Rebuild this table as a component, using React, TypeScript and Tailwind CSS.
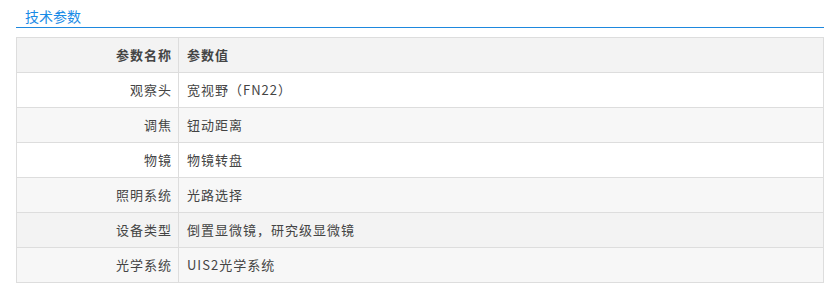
const PARAMS = [
  { name: "观察头", value: "宽视野（FN22）" },
  { name: "调焦", value: "钮动距离" },
  { name: "物镜", value: "物镜转盘" },
  { name: "照明系统", value: "光路选择" },
  { name: "设备类型", value: "倒置显微镜，研究级显微镜" },
  { name: "光学系统", value: "UIS2光学系统" },
];

const FONT = "font-['SimSun','Noto_Sans_CJK_SC',sans-serif]";

export default function App() {
  return (
    <div className={`bg-white w-[838px] h-[301px] overflow-hidden pl-4 pr-[14px] ${FONT}`}>
      <div className="h-[28px] border-b border-[#1e88de] pl-[9px] pt-[3px]">
        <span className="text-[14px] leading-[20px] text-[#1a8be6]">技术参数</span>
      </div>

      <table className="mt-[9px] w-full border-collapse border border-[#dddddd] text-[13px] tracking-[1px] text-[#444]">
        <thead>
          <tr className="bg-[#f3f3f3]">
            <th className="w-[162px] h-[35px] border border-[#dddddd] pr-[6px] text-right font-bold">
              参数名称
            </th>
            <th className="h-[35px] border border-[#dddddd] pl-2 text-left font-bold">参数值</th>
          </tr>
        </thead>
        <tbody>
          {PARAMS.map((p, i) => (
            <tr
              key={p.name}
              className={i === 4 ? "bg-[#f3f3f3]" : i % 2 === 1 || i === 3 || i === 5 ? "bg-[#f7f7f7]" : "bg-white"}
            >
              <td className="h-[35px] border border-[#dddddd] pr-[6px] text-right">{p.name}</td>
              <td className="h-[35px] border border-[#dddddd] pl-2">{p.value}</td>
            </tr>
          ))}
        </tbody>
      </table>

      <div className="mt-[15px] pl-[9px]">
        <span className="text-[14px] leading-[20px] text-[#1a8be6]">技术文档</span>
      </div>
    </div>
  );
}
